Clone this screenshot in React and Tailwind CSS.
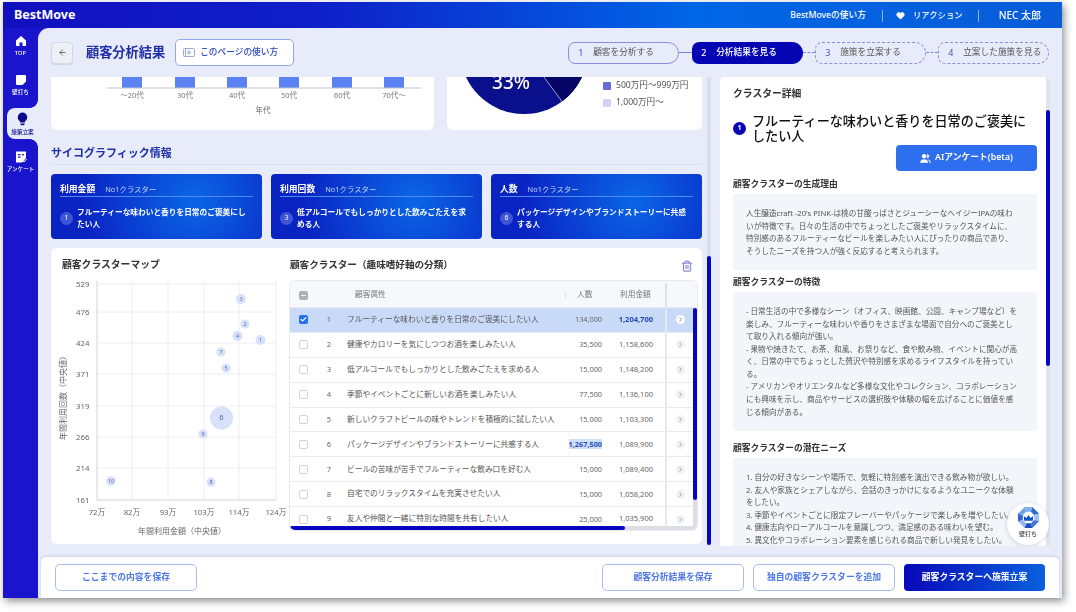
import React from "react";
import { Trash2, ArrowLeft, ChevronRight, Check, Minus, Users, Heart } from "lucide-react";

const rows = [
  [1, "フルーティーな味わいと香りを日常のご褒美にしたい人", "134,000", "1,204,700"],
  [2, "健康やカロリーを気にしつつお酒を楽しみたい人", "35,500", "1,158,600"],
  [3, "低アルコールでもしっかりとした飲みごたえを求める人", "15,000", "1,148,200"],
  [4, "季節やイベントごとに新しいお酒を楽しみたい人", "77,500", "1,136,100"],
  [5, "新しいクラフトビールの味やトレンドを積極的に試したい人", "15,000", "1,103,300"],
  [6, "パッケージデザインやブランドストーリーに共感する人", "1,267,500", "1,089,900"],
  [7, "ビールの苦味が苦手でフルーティーな飲み口を好む人", "15,000", "1,089,400"],
  [8, "自宅でのリラックスタイムを充実させたい人", "15,000", "1,058,200"],
  [9, "友人や仲間と一緒に特別な時間を共有したい人", "25,000", "1,035,900"],
];

const points = [
  [241, 299, 5, 3], [245, 324, 4.6, 2], [237.5, 336, 5, 4], [260.5, 340, 5, 1], [221, 352, 4.6, 7],
  [226, 368, 4.6, 5], [221.5, 418, 11.5, 6], [203, 434, 4.6, 9], [111, 481, 4.8, 10], [211, 482, 4.6, 8],
];

function Bars() {
  const xs = [122, 175, 227, 279, 332, 384];
  const labels = ["〜20代", "30代", "40代", "50代", "60代", "70代〜"];
  return (
    <svg width="383" height="53" className="block">
      <g transform="translate(-51,-77)">
        {xs.map((x) => <rect key={x} x={x} y="77" width="20" height="11" fill="#5b82f4" />)}
        <line x1="107" x2="421" y1="88" y2="88" stroke="#c4c6cc" />
        {xs.map((x, i) => <text key={x} x={x + 10} y="98" textAnchor="middle" fontSize="7.5" fill="#777">{labels[i]}</text>)}
        <text x="263" y="113" textAnchor="middle" fontSize="7.5" fill="#666">年代</text>
      </g>
    </svg>
  );
}

function Pie() {
  return (
    <svg width="140" height="53" className="block">
      <g transform="translate(-447,-77)">
        <circle cx="524" cy="50" r="64" fill="#0a0f8c" />
        <path d="M524 50 L562 101.500 A64 64 0 0 0 588 50 Z" fill="#050565" />
        <line x1="524" y1="50" x2="562" y2="101.500" stroke="#c9cbe8" strokeWidth="0.8" />
        <text x="511" y="88.500" textAnchor="middle" fontSize="19" fontWeight="500" fill="#fff">33%</text>
      </g>
    </svg>
  );
}

function Scatter() {
  const ys = [[284, 529], [312, 476], [343, 424], [374, 371], [406, 319], [437, 266], [468, 214], [500, 161]];
  const xs = [[97, "72万"], [132, "82万"], [168, "93万"], [204, "103万"], [239, "114万"], [276, "124万"]];
  return (
    <svg width="239" height="263" className="block">
      <g transform="translate(-51,-281)">
        {xs.map(([x]) => <line key={x} x1={x} x2={x} y1="281" y2="500" stroke="#eceef2" />)}
        {ys.map(([y]) => <line key={y} x1="97" x2="276" y1={y} y2={y} stroke="#eceef2" />)}
        <line x1="97" x2="97" y1="281" y2="500" stroke="#d9dbe2" />
        <line x1="97" x2="276" y1="500" y2="500" stroke="#d9dbe2" />
        {ys.map(([y, l]) => <text key={y} x="89.500" y={y + 2.700} textAnchor="end" fontSize="7.800" fill="#666">{l}</text>)}
        {xs.map(([x, l]) => <text key={x} x={x} y="514.500" textAnchor="middle" fontSize="7.800" fill="#666">{l}</text>)}
        <text x="182" y="533.500" textAnchor="middle" fontSize="8" fill="#666">年間利用金額（中央値）</text>
        <text transform="translate(66,396) rotate(-90)" textAnchor="middle" fontSize="8" fill="#666">年間利用回数（中央値）</text>
        {points.map(([x, y, r, n]) => (
          <g key={n}>
            <circle cx={x} cy={y} r={r} fill="#d8e1fa" />
            <text x={x} y={y + 2} textAnchor="middle" fontSize={n === 6 ? 7.500 : 5.500} fill="#5565b8">{n}</text>
          </g>
        ))}
      </g>
    </svg>
  );
}

function Step({ n, label, kind }) {
  const base = "flex items-center h-[22px] w-[111px] pl-[9px] rounded-l-[7px] rounded-r-[11px] text-[8.700px] shrink-0 whitespace-nowrap";
  if (kind === "active")
    return <div className={`${base} bg-[#0505b4] text-white font-medium`}><span className="w-[15px] text-[9px]">{n}</span><span>{label}</span></div>;
  if (kind === "done")
    return <div className={`${base} border border-[#8b90dc] text-[#555]`}><span className="w-[15px] text-[9px] text-[#4a4fc0]">{n}</span><span>{label}</span></div>;
  return <div className={`${base} border border-dashed border-[#8b90dc] text-[#555]`}><span className="w-[15px] text-[9px] text-[#4a4fc0]">{n}</span><span>{label}</span></div>;
}

function TopCard({ metric, n, text }) {
  return (
    <div className="h-[65px] rounded-[4px] px-[9px] pt-[9px] text-white bg-[radial-gradient(circle_at_68%_40%,#0a66e6,#0a24c4_75%)]">
      <div className="flex items-baseline gap-[10px] h-[14px] border-b border-[#4d8cf0] leading-[12px]">
        <span className="text-[8.800px] font-bold">{metric}</span>
        <span className="text-[7.400px] text-[#c4d6fa]">No1クラスター</span>
      </div>
      <div className="flex items-center mt-[9px] gap-[4px]">
        <span className="w-[13px] h-[13px] rounded-full bg-[#3f55d8] text-[7px] flex items-center justify-center shrink-0">{n}</span>
        <span className="text-[7.700px] font-bold leading-[12px]">{text}</span>
      </div>
    </div>
  );
}

function Row({ r }) {
  const [n, text, people, amount] = r;
  const sel = n === 1;
  return (
    <div className={`grid grid-cols-[27px_24px_224px_45px_55px_32px] h-[24.900px] items-center shrink-0 border-b border-[#e9ebf0] ${sel ? "bg-[#c9d9f8]" : "bg-white"}`}>
      <div className="flex justify-center">
        <span className={`w-[9px] h-[9px] rounded-[2px] flex items-center justify-center ${sel ? "bg-[#2670e8]" : "bg-white border border-[#d0d3da]"}`}>
          {sel && <Check size={7} strokeWidth={4} color="#fff" />}
        </span>
      </div>
      <div className="text-center text-[7.500px] text-[#666]">{n}</div>
      <div className="pl-[6px] text-[7.700px] text-[#555] whitespace-nowrap">{text}</div>
      <div className="text-right pr-[8px] text-[7.300px] text-[#666] whitespace-nowrap">
        {n === 6 ? <span className="bg-[#cfe0fa] font-bold text-[#2a50b8]">{people}</span> : people}
      </div>
      <div className={`text-right pr-[12px] text-[7.500px] whitespace-nowrap ${sel ? "font-bold text-[#1f48b8]" : "text-[#666]"}`}>{amount}</div>
      <div className={`h-full flex items-center justify-center pr-[4px] border-l-2 border-[#e6e8ee] ${sel ? "bg-[#c9d9f8]" : "bg-white"}`}>
        <span className={`w-[9px] h-[9px] rounded-full flex items-center justify-center ${sel ? "bg-white" : "bg-[#f1f2f6]"}`}>
          <ChevronRight size={7} strokeWidth={2.500} color={sel ? "#3f64c8" : "#888"} />
        </span>
      </div>
    </div>
  );
}

function Block({ title, children, className }) {
  return (
    <div className={className}>
      <div className="text-[8.750px] font-bold text-[#333] leading-[12px]">{title}</div>
      <div className="mt-[4px] rounded-[3px] bg-[#f3f5fa] px-[13px] text-[7.650px] leading-[12.550px] text-[#555] whitespace-nowrap">{children}</div>
    </div>
  );
}

function Outline({ w, children }) {
  return (
    <button className={`${w} h-[27px] rounded-[5px] border border-[#a9bdf0] bg-white text-[8.800px] font-bold text-[#4f78e8]`}>{children}</button>
  );
}

function NavItem({ active, label, children }) {
  return (
    <div className={`relative flex flex-col items-center ${active ? "bg-[#e8ecfa] text-[#0a0a8c] ml-[4px] rounded-l-[8px] w-[31px] h-[31px] justify-center" : "text-white w-[35px]"}`}>
      {active && <div className="absolute right-0 top-[-8px] w-[8px] h-[8px] bg-[radial-gradient(circle_at_0_0,#1a14cc_7.500px,#e8ecfa_8px)]" />}
      {active && <div className="absolute right-0 bottom-[-8px] w-[8px] h-[8px] bg-[radial-gradient(circle_at_0_100%,#1a14cc_7.500px,#e8ecfa_8px)]" />}
      {children}
      <span className="text-[5.600px] leading-[7px] mt-[3px] font-medium whitespace-nowrap">{label}</span>
    </div>
  );
}

export default function App() {
  return (
    <div className="w-[1076px] h-[612px] bg-white pl-[3px] pt-[2px] overflow-hidden [font-family:'Noto_Sans','Noto_Sans_CJK_JP',sans-serif]">
      <div className="w-[1059px] h-[596px] flex flex-col shadow-[2px_3px_8px_rgba(0,0,0,0.45)] bg-[#1a14cc] blur-[0.4px]">
        <header className="h-[26px] shrink-0 flex items-center pt-[1px] text-white bg-[linear-gradient(90deg,#1210be_0%,#0e20c8_30%,#0066e6_65%,#0a5cd8_100%)]">
          <div className="ml-[11px] text-[12.500px] font-bold">BestMove</div>
          <div className="ml-auto text-[8.700px] font-medium whitespace-nowrap">BestMoveの使い方</div>
          <div className="w-px h-[12px] bg-[#8fb6f4] ml-[16px]" />
          <Heart size={9} fill="#fff" color="#fff" className="ml-[13px]" />
          <div className="ml-[8px] text-[8.400px] font-medium">リアクション</div>
          <div className="w-px h-[12px] bg-[#8fb6f4] ml-[15px]" />
          <div className="ml-[20px] mr-[21px] text-[10px] font-medium">NEC 太郎</div>
        </header>
        <div className="flex-1 flex min-h-0">
          <nav className="w-[35px] shrink-0 flex flex-col items-start pt-[7px] bg-[#1a14cc]">
            <NavItem label="TOP">
              <svg width="12" height="12" viewBox="0 0 24 24" fill="currentColor"><path d="M12 2 2 11v11h7v-7h6v7h7V11z" /></svg>
            </NavItem>
            <div className="mt-[17px]">
              <NavItem label="壁打ち">
                <svg width="12" height="12" viewBox="0 0 24 24" fill="currentColor"><path d="M4 2h16a2 2 0 0 1 2 2v11l-7 7H4a2 2 0 0 1-2-2V4a2 2 0 0 1 2-2z" /></svg>
              </NavItem>
            </div>
            <div className="mt-[12px]">
              <NavItem active label="施策立案">
                <svg width="11" height="14" viewBox="0 0 22 26" fill="currentColor"><path d="M11 0a9.500 9.500 0 0 0-5 17.500V20h10v-2.500A9.500 9.500 0 0 0 11 0zM7 22h8v1.500a2 2 0 0 1-2 2H9a2 2 0 0 1-2-2z" /></svg>
              </NavItem>
            </div>
            <div className="mt-[12px]">
              <NavItem label="アンケート">
                <svg width="12" height="12" viewBox="0 0 24 24" fill="currentColor"><path d="M3 1h18a1 1 0 0 1 1 1v12l-8 9H3a1 1 0 0 1-1-1V2a1 1 0 0 1 1-1z" /><path d="M6 7h5M6 12h5M14 7h4" stroke="#1a14cc" strokeWidth="2.500" /><path d="m15 19 3 3 5-6" stroke="#fff" strokeWidth="2" fill="none" /></svg>
              </NavItem>
            </div>
          </nav>
          <main className="flex-1 min-w-0 flex flex-col bg-[#e8ecfa] rounded-tl-[11px]">
            <div className="h-[49px] shrink-0 flex items-center pl-[13px]">
              <div className="w-[22px] h-[22px] rounded-[4px] border border-[#d4d7e4] bg-[#eef0f8] flex items-center justify-center shadow-[0_1px_1px_rgba(0,0,0,0.1)]">
                <ArrowLeft size={9} color="#444" />
              </div>
              <h1 className="ml-[13px] text-[13.200px] font-bold text-[#1f2fa8] whitespace-nowrap">顧客分析結果</h1>
              <div className="ml-[10px] w-[119px] h-[27px] rounded-[5px] border border-[#8fa9ee] bg-white flex items-center pl-[7px] text-[8.700px] font-medium text-[#2a48c0]">
                <svg width="12" height="9" viewBox="0 0 24 18" fill="none" stroke="#9aa8dc" strokeWidth="2" className="mr-[5px]"><rect x="1" y="1" width="22" height="16" rx="2" /><path d="M10 5.500v7l6-3.500z" /><path d="M5 1v16" /></svg>
                このページの使い方
              </div>
              <div className="ml-[274px] flex items-center">
                <Step n="1" label="顧客を分析する" kind="done" />
                <div className="w-[13px] h-px bg-[#7f86d8]" />
                <Step n="2" label="分析結果を見る" kind="active" />
                <div className="w-[12px] border-t border-dashed border-[#7f86d8]" />
                <Step n="3" label="施策を立案する" />
                <div className="w-[12px] border-t border-dashed border-[#7f86d8]" />
                <Step n="4" label="立案した施策を見る" />
              </div>
            </div>

            <div className="h-[469px] shrink-0 flex pl-[13px]">
              <div className="w-[651px] shrink-0 flex flex-col">
                <div className="flex gap-[13px] h-[53px] shrink-0">
                  <div className="w-[383px] bg-white rounded-b-[6px] overflow-hidden"><Bars /></div>
                  <div className="w-[255px] bg-white rounded-b-[6px] flex overflow-hidden">
                    <Pie />
                    <div className="ml-[16px] pt-[0px] text-[8.600px] text-[#555]">
                      <div className="flex items-center h-[17px] gap-[5px] whitespace-nowrap"><span className="w-[8px] h-[8px] rounded-[1px] bg-[#666ce0]" />500万円〜999万円</div>
                      <div className="flex items-center h-[17px] gap-[5px] whitespace-nowrap"><span className="w-[8px] h-[8px] rounded-[1px] bg-[#d0d3f5]" />1,000万円〜</div>
                    </div>
                  </div>
                </div>
                <div className="mt-[14px] h-[21px] border-b border-[#dcdfee] text-[11px] font-bold leading-[18px] text-[#1f2fa8]">サイコグラフィック情報</div>
                <div className="mt-[9px] grid grid-cols-3 gap-[9px]">
                  <TopCard metric="利用金額" n="1" text={<>フルーティーな味わいと香りを日常のご褒美にし<br />たい人</>} />
                  <TopCard metric="利用回数" n="3" text={<>低アルコールでもしっかりとした飲みごたえを求<br />める人</>} />
                  <TopCard metric="人数" n="6" text={<>パッケージデザインやブランドストーリーに共感<br />する人</>} />
                </div>
                <div className="mt-[9px] h-[296px] bg-white rounded-[6px] flex overflow-hidden">
                  <div className="w-[239px] shrink-0">
                    <div className="h-[33px] pl-[11px] pt-[2px] flex items-center text-[9.800px] font-bold text-[#333]">顧客クラスターマップ</div>
                    <Scatter />
                  </div>
                  <div className="w-[407px] shrink-0">
                    <div className="h-[33px] pt-[2px] flex items-center justify-between pr-[4px] text-[9.600px] font-bold text-[#333]">
                      <span>顧客クラスター（趣味嗜好軸の分類）</span>
                      <Trash2 size={12} strokeWidth={2.500} color="#8a8fd8" />
                    </div>
                    <div className="relative h-[249px] rounded-[5px] ring-1 ring-[#e8eaf0] overflow-hidden flex flex-col">
                      <div className="grid grid-cols-[27px_24px_224px_45px_55px_32px] h-[27px] pt-[2px] shrink-0 items-center bg-[#f7f8fb] text-[7.700px] text-[#777] border-b border-[#e9ebf0]">
                        <div className="flex justify-center"><span className="w-[9px] h-[9px] rounded-[2px] bg-[#aeb0b8] flex items-center justify-center"><Minus size={7} strokeWidth={3} color="#fff" /></span></div>
                        <div />
                        <div className="pl-[14px] whitespace-nowrap">顧客属性</div>
                        <div className="pl-[11px] border-l border-[#e2e4ea] h-[8px] flex items-center whitespace-nowrap">人数</div>
                        <div className="pl-[10px] whitespace-nowrap">利用金額</div>
                        <div className="h-full border-l-2 border-[#e0e2e8]" />
                      </div>
                      {rows.map((r) => <Row key={r[0]} r={r} />)}
                      <div className="absolute right-0 top-[27px] bottom-0 w-[4px] bg-[#dcdee4]"><div className="h-[192px] bg-[#0606c0] rounded-[2px]" /></div>
                      <div className="absolute left-0 right-0 bottom-0 h-[4px] bg-[#dcdee4]"><div className="h-full w-[335px] bg-[#0606c0] rounded-[2px]" /></div>
                    </div>
                  </div>
                </div>
              </div>
              <div className="ml-[5px] w-[4px] shrink-0 bg-[#dcdfe8] flex flex-col"><div className="mt-[179px] h-[289px] rounded-[2px] bg-[#0606c0]" /></div>
              <aside className="ml-[9px] w-[330px] shrink-0 bg-white rounded-t-[4px] relative overflow-hidden pl-[13px] pr-[13px] pt-[10px]">
                <div className="text-[9.800px] font-bold text-[#333] leading-[14px]">クラスター詳細</div>
                <div className="mt-[13px] flex items-center gap-[6px] w-[304px]">
                  <span className="w-[13px] h-[13px] rounded-full bg-[#0505b4] text-white text-[7px] font-bold flex items-center justify-center shrink-0">1</span>
                  <div className="text-[13.100px] font-medium leading-[14.500px] text-[#111] whitespace-nowrap">フルーティーな味わいと香りを日常のご褒美に<br />したい人</div>
                </div>
                <div className="flex justify-end mt-[2px]">
                  <div className="w-[141px] h-[26px] rounded-[4px] bg-[#2e6ff0] text-white text-[8.800px] font-semibold flex items-center justify-center gap-[4px]">
                    <Users size={11} fill="#fff" />AIアンケート(beta)
                  </div>
                </div>
                <Block title="顧客クラスターの生成理由" className="mt-[7px]">
                  <div className="py-[13px]">
                    人生醸造craft -20's PINK-は桃の甘酸っぱさとジューシーなヘイジーIPAの味わ<br />
                    いが特徴です。日々の生活の中でちょっとしたご褒美やリラックスタイムに、<br />
                    特別感のあるフルーティーなビールを楽しみたい人にぴったりの商品であり、<br />
                    そうしたニーズを持つ人が強く反応すると考えられます。
                  </div>
                </Block>
                <Block title="顧客クラスターの特徴" className="mt-[6px]">
                  <div className="py-[13px]">
                    - 日常生活の中で多様なシーン（オフィス、映画館、公園、キャンプ場など）を<br />
                    楽しみ、フルーティーな味わいや香りをさまざまな場面で自分へのご褒美とし<br />
                    て取り入れる傾向が強い。<br />
                    - 果物や焼きたて、お茶、和風、お祭りなど、食や飲み物、イベントに関心が高<br />
                    く、日常の中でちょっとした贅沢や特別感を求めるライフスタイルを持ってい<br />
                    る。<br />
                    - アメリカンやオリエンタルなど多様な文化やコレクション、コラボレーション<br />
                    にも興味を示し、商品やサービスの選択肢や体験の幅を広げることに価値を感<br />
                    じる傾向がある。
                  </div>
                </Block>
                <Block title="顧客クラスターの潜在ニーズ" className="mt-[11px]">
                  <div className="py-[13px]">
                    1. 自分の好きなシーンや場所で、気軽に特別感を演出できる飲み物が欲しい。<br />
                    2. 友人や家族とシェアしながら、会話のきっかけになるようなユニークな体験<br />
                    をしたい。<br />
                    3. 季節やイベントごとに限定フレーバーやパッケージで楽しみを増やしたい。<br />
                    4. 健康志向やローアルコールを意識しつつ、満足感のある味わいを望む。<br />
                    5. 異文化やコラボレーション要素を感じられる商品で新しい発見をしたい。
                  </div>
                </Block>
                <div className="absolute right-0 top-0 bottom-0 w-[4px] bg-[#e2e4ea]"><div className="mt-[33px] h-[256px] rounded-[2px] bg-[#0606c0]" /></div>
                <div className="absolute right-[1px] bottom-[1px] w-[42px] h-[42px] rounded-full bg-white shadow-[0_1px_5px_rgba(0,0,0,0.15)] flex flex-col items-center pt-[3px]">
                  <svg width="23" height="23" viewBox="0 0 24 24">
                    <path d="M8 1h8l-1.500 5h-5z" fill="#7fb0ee" />
                    <path d="M16 1l7 7-5 1.500-3.500-3.500z" fill="#2f68d0" />
                    <path d="M23 8v8l-5-1.500v-5z" fill="#9cc4f2" />
                    <path d="M23 16l-7 7-1.500-5 3.500-3.500z" fill="#3f78d8" />
                    <path d="M16 23H8l1.500-5h5z" fill="#1f50c0" />
                    <path d="M8 23l-7-7 5-1.500L9.500 18z" fill="#8fb8ee" />
                    <path d="M1 16V8l5 1.500v5z" fill="#2f68d0" />
                    <path d="M1 8l7-7 1.500 5L6 9.500z" fill="#6ea2e8" />
                    <path d="M7.500 15.500 7 10.500l2.800 2L12 9.500l2.200 3 2.800-2-.5 5z" fill="#0a50c8" />
                  </svg>
                  <span className="text-[6px] font-medium text-[#444] leading-[8px] mt-[1px]">壁打ち</span>
                </div>
              </aside>
            </div>

            <div className="mt-[11px] ml-[3px] mr-[3px] h-[41px] shrink-0 rounded-t-[5px] bg-white shadow-[0_-1px_3px_rgba(0,0,0,0.12)] flex items-center pl-[14px] pr-[14px]">
              <Outline w="w-[142px]">ここまでの内容を保存</Outline>
              <div className="ml-auto flex gap-[9px]">
                <Outline w="w-[142px]">顧客分析結果を保存</Outline>
                <Outline w="w-[142px]">独自の顧客クラスターを追加</Outline>
                <button className="w-[141px] h-[27px] rounded-[4px] text-white text-[8.800px] font-bold bg-[linear-gradient(90deg,#0808b8,#0a60dc)]">顧客クラスターへ施策立案</button>
              </div>
            </div>
          </main>
        </div>
      </div>
    </div>
  );
}
